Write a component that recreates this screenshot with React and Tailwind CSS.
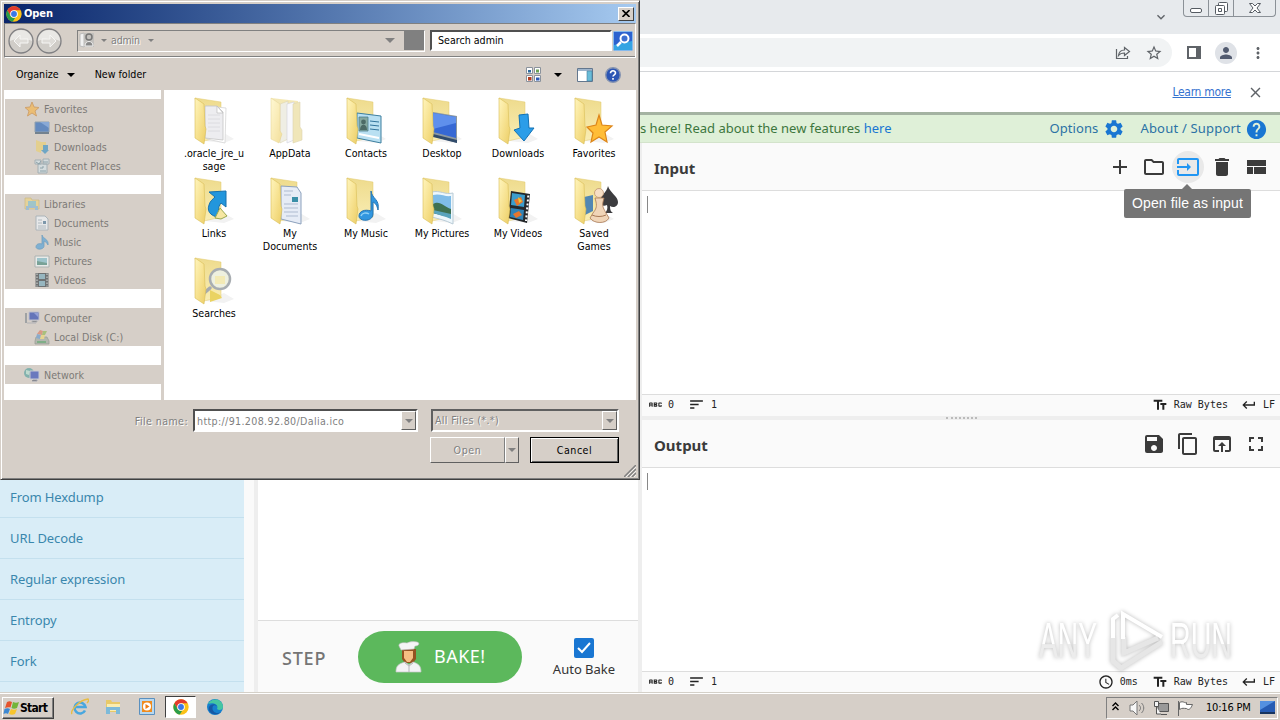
import {
  MdAbc, MdAdd, MdClose, MdContentCopy, MdDelete, MdExpandMore, MdFullscreen, MdHelp, MdInput,
  MdKeyboardReturn, MdMoreVert, MdOpenInBrowser, MdOutlineFolder, MdPerson, MdSave, MdSchedule,
  MdSettings, MdSort, MdStarBorder, MdTextFields,
} from "react-icons/md";

const operations = ["From Hexdump", "URL Decode", "Regular expression", "Entropy", "Fork"];

const places = [
  [["Favorites", "star"], ["Desktop", "desktop"], ["Downloads", "download"], ["Recent Places", "recent"]],
  [["Libraries", "library"], ["Documents", "doc"], ["Music", "music"], ["Pictures", "picture"], ["Videos", "video"]],
  [["Computer", "computer"], ["Local Disk (C:)", "disk"]],
  [["Network", "network"]],
];

const folders = [
  [".oracle_jre_u\nsage", "paper"],
  ["AppData", "appdata"],
  ["Contacts", "contacts"],
  ["Desktop", "desktop"],
  ["Downloads", "download"],
  ["Favorites", "star"],
  ["Links", "link"],
  ["My\nDocuments", "doc"],
  ["My Music", "music"],
  ["My Pictures", "picture"],
  ["My Videos", "video"],
  ["Saved\nGames", "games"],
  ["Searches", "search"],
];

const ChromeLogo = ({ size }) => (
  <svg width={size} height={size} viewBox="0 0 48 48" className="shrink-0">
    <circle cx="24" cy="24" r="23" fill="#fbc116" />
    <path d="M4.100 12.500A23 23 0 0 1 43.900 12.500H24L14 29.800z" fill="#e33b2e" />
    <path d="M4.100 12.500 14 29.800a11.500 11.500 0 0 0 14 5L20.500 46.700A23 23 0 0 1 4.100 12.500z" fill="#2a9d4a" />
    <circle cx="24" cy="24" r="11.500" fill="#fff" />
    <circle cx="24" cy="24" r="8.800" fill="#3b78e7" />
  </svg>
);

const folderContents = {
  paper: (
    <>
      <path d="M17 9 36 11 35 46 17 42z" fill="#fff" stroke="#d5d5d5" strokeWidth=".8" />
      <path d="M15 9h12l6 6v28l-18-2z" fill="#ededf0" stroke="#c4c4c4" strokeWidth=".8" />
      <path d="M27 9v7h6z" fill="#fff" stroke="#bbb" strokeWidth=".7" />
      <path d="M18 18h12M18 22h12M18 26h12M18 30h12M18 34h12" fill="none" stroke="#dcdce0" />
    </>
  ),
  contacts: (
    <>
      <path d="M15 16 39 19V46L15 41z" fill="#b9e0f2" stroke="#3d7f9f" />
      <path d="M17 20h9v14h-9z" fill="#86a9a0" stroke="#4c7d8d" strokeWidth=".8" />
      <circle cx="21.500" cy="25" r="2.400" fill="#4d6b66" />
      <path d="M18 33c0-7 7-7 7 0z" fill="#4d6b66" />
      <path d="M28 24l9 1M28 28l9 1M28 32l9 1" stroke="#31739b" />
      <path d="M17 37l20 4" stroke="#fff" strokeWidth="2" />
    </>
  ),
  desktop: (
    <>
      <path d="M15 15 39 19V46L15 39z" fill="#8c98a0" />
      <path d="M15 16 38 20V41L15 35z" fill="#3668d4" />
      <path d="M15 16 38 20V26L15 32z" fill="#5f90ec" />
      <path d="M15 37 39 43V46L15 40z" fill="#314b6b" />
    </>
  ),
  download: (
    <path d="M25 18l9-1 1 14h5L30 44 20 33l6-2z" fill="#2b9de8" stroke="#1272b5" />
  ),
  star: (
    <path d="M29 18l3 10 10 1-7 6 2 10-8-5-8 5 2-9-6-6 9-2z" fill="#ffbd37" stroke="#dd8518" strokeWidth="1.200" />
  ),
  link: (
    <>
      <path d="M19 15l17-1v16l-5-4c-4 5-3 10 1 15-9-1-16-5-13-13 1-4 4-6 6-8z" fill="#2296dc" stroke="#1771ae" />
      <path d="M25 41l5-10 7 8-6 3z" fill="#f6e7a2" stroke="#9aa84f" />
    </>
  ),
  doc: (
    <>
      <path d="M15 9l16 1 4 6v31l-20-5z" fill="#e6ecf6" stroke="#8ca1bd" />
      <path d="M18 14h9M18 18h7M18 27h14M18 31h14M18 35h14M20 39h12" stroke="#aebbd0" />
      <path d="M26 20h6v5h-6z" fill="#3a8fa8" />
    </>
  ),
  music: (
    <>
      <path d="M29 14c1 8 9 8 7 19-1-5-3-7-5-8v12c0 8-14 8-14 2 0-5 6-7 12-5z" fill="#3196df" stroke="#2474b3" />
      <path d="M19 39c1-3 5-4 8-2" stroke="#8fd1f6" strokeWidth="1.500" fill="none" />
    </>
  ),
  picture: (
    <>
      <path d="M14 15c8-2 13 3 21 1v31c-8-4-14-5-21-7z" fill="#eef7fc" stroke="#b9cbd6" />
      <path d="M15 18c7-2 12 2 18 1v22c-7-3-12-4-18-5z" fill="#7fbce8" />
      <path d="M15 27c7-4 11 3 18 5v9c-7-3-12-3-18-5z" fill="#3f7152" />
      <path d="M15 33l18 4v5c-7-3-12-4-18-6z" fill="#5aa4bd" />
    </>
  ),
  video: (
    <>
      <path d="M17 14 36 17 33 46 14 41z" fill="#25282b" />
      <path d="M18 16l13 2-1 12-13-2z" fill="#3b9dcc" />
      <path d="M17 31l13 2-1 10-13-3z" fill="#3083b7" />
      <path d="M20 23l7-3 2 5-6 4zM19 37l6-3 3 4-6 3z" fill="#e8762c" />
      <path d="M24 20l4 4-3 2z" fill="#e7ca39" />
      <path d="M34.300 18.500 32 44" stroke="#fff" strokeWidth="2" strokeDasharray="2 2" />
    </>
  ),
  games: (
    <>
      <path d="M14 20l9-2v16l-8 4z" fill="#5287b3" />
      <path d="M38 9c2 7 10 10 10 16 0 5-5 6-8 4 0 4 1 6 3 7h-8c2-2 3-5 2-8-4 2-7 0-7-4 1-6 7-9 8-15z" fill="#3c3c3f" />
      <path d="M25 21h9l-1 4c-1 5 1 7 3 11l3 5c-3 6-15 6-19 0l3-5c3-4 4-6 3-11z" fill="#f0d5b8" stroke="#a87955" strokeWidth=".8" />
      <circle cx="29" cy="16" r="4.500" fill="#f6dec5" stroke="#b78b65" strokeWidth=".7" />
      <path d="M22 38c4 2 10 2 14 0" stroke="#a87955" fill="none" />
    </>
  ),
  search: (
    <>
      <path d="M20 33 30 38 32 41 20 45z" fill="#ead362" />
      <path d="M20 31 13 37" stroke="#a5aab0" strokeWidth="3.500" strokeLinecap="round" />
      <circle cx="30" cy="22" r="10" fill="#eef0df" stroke="#a8adb1" strokeWidth="2.500" />
      <path d="M25 19h10v8H25z" fill="#f5e7a3" opacity=".7" />
    </>
  ),
};

const FolderIcon = ({ kind }) => (
  <svg width="48" height="48" viewBox="0 0 48 48" className="shrink-0">
    <defs>
      <linearGradient id="flap" x1="0" y1="0" x2="1" y2="1">
        <stop offset="0" stopColor="#fff5bd" />
        <stop offset=".55" stopColor="#f6e08c" />
        <stop offset="1" stopColor="#ecce66" />
      </linearGradient>
      <linearGradient id="back" x1="0" y1="0" x2="0" y2="1">
        <stop offset="0" stopColor="#eedb8c" />
        <stop offset="1" stopColor="#f9edb4" />
      </linearGradient>
    </defs>
    {kind === "appdata" ? (
      <g opacity=".65">
        <path d="M5 1 32 4V42L10 44z" fill="url(#back)" />
        <path d="M14 7 22 4v38l-8 4z" fill="#e8e6d6" stroke="#c9bd88" strokeWidth=".6" />
        <path d="M21 7 28 5v38l-7 3z" fill="#f5f5fa" stroke="#b5b9c8" strokeWidth=".6" />
        <path d="M27 7 34 5v25l2 3v10l-9 3z" fill="#e9da95" stroke="#c9bd88" strokeWidth=".6" />
        <path d="M5 1 14 7v27l2 3-3 9-8-4z" fill="url(#flap)" stroke="#d5bb5a" strokeWidth=".5" />
      </g>
    ) : (
      <>
        <path d="M34 36 44 42 34 46 15 44z" fill="#f2f2f2" />
        <path d="M5 1 31 5V40L14 44z" fill="url(#back)" stroke="#e3ca6e" strokeWidth=".5" />
        {folderContents[kind]}
        <path d="M5 1 14 7 15 29l1 3-2 15-9-6z" fill="url(#flap)" stroke="#d8bd58" strokeWidth=".6" />
      </>
    )}
  </svg>
);

const smallIcons = {
  star: <path d="M8 1l2 5 5 .5-4 3.500 1.500 5L8 12l-4.500 3L5 10 1 6.500 6 6z" fill="#f3b857" stroke="#cc9350" />,
  desktop: (
    <>
      <path d="M1 2h14v10H1z" fill="#3f74bd" stroke="#7890a8" />
      <path d="M6 2h9v6z" fill="#709ddb" />
      <path d="M1 12h14v2H1z" fill="#53697d" />
    </>
  ),
  download: (
    <>
      <path d="M2 1l5 2v11l-5-2zM7 3h5v9H7z" fill="#e8cf7b" />
      <path d="M9 6h5v5h1l-4 4-4-4h2z" fill="#4d99c4" />
    </>
  ),
  recent: (
    <>
      <path d="M1 2h6v4H1zM9 1h6v5H9zM4 6h9v9H4z" fill="#d3e0e5" stroke="#92a4ad" />
      <path d="M2 4l3 2 2-3M9 4h5M6 10h3v-2M6 13h6" fill="none" stroke="#74929e" />
    </>
  ),
  library: (
    <>
      <path d="M1 2h6l1 2h7v9H1z" fill="#ead38a" stroke="#c9b36d" strokeWidth=".7" />
      <path d="M4 5h8v6H4z" fill="#8dc2c9" />
      <path d="M2 10h12v4h-3v-2H5v2H2z" fill="#8eb9d4" />
    </>
  ),
  doc: (
    <>
      <path d="M2 1h9l3 3v11H2z" fill="#edf1f5" stroke="#9dacb5" />
      <path d="M4 5h4M4 8h4M4 11h8M4 13h8" stroke="#a3b2bd" />
      <path d="M9 6h3v3H9z" fill="#5e85a1" />
    </>
  ),
  music: <path d="M8 1c1 4 7 4 6 10-1-2-2-3-4-4v5c0 4-8 4-8 1 0-3 3-4 6-3z" fill="#62a6d6" stroke="#4f8fbb" strokeWidth=".8" />,
  picture: (
    <>
      <path d="M1 3h14v11H1z" fill="#eef3f3" stroke="#9fa9aa" />
      <path d="M3 5h10v7H3z" fill="#8bc1cc" />
      <path d="M3 8l10 2v2H3z" fill="#5b9387" />
    </>
  ),
  video: (
    <>
      <path d="M1.500 1h13v14h-13z" fill="#4d5457" />
      <path d="M5 2h6v5H5zM5 9h6v5H5z" fill="#83aebd" />
      <path d="M3 1.500v13M13 1.500v13" stroke="#d9dddd" strokeDasharray="1.500 1.500" />
    </>
  ),
  computer: (
    <>
      <path d="M1 3h2v10H1z" fill="#8d9398" />
      <path d="M5 2h10v8H5z" fill="#4058b4" stroke="#b5bbd0" />
      <path d="M10 3h4v4z" fill="#7e91dc" />
      <path d="M8 11h5v1H8zM3 13h9" stroke="#a4a8b0" />
    </>
  ),
  disk: (
    <>
      <path d="M2 8h11l2 4v3H1v-3z" fill="#a8b0a7" stroke="#838b83" strokeWidth=".7" />
      <path d="M3 5l3-4 3 1-1 4z" fill="#d9876f" />
      <path d="M9 2l4 0-2 4-3 0z" fill="#9bbb63" />
      <path d="M2 9l1-4 4 1-1 4z" fill="#719fcd" />
      <path d="M7 6h4l-1 4H6z" fill="#ecd67e" />
      <path d="M3 13h9" stroke="#4d9f60" strokeWidth="1.500" />
    </>
  ),
  network: (
    <>
      <circle cx="5" cy="6" r="5" fill="#67a8a5" />
      <path d="M2 3l4 1-1 4-3-1z" fill="#b6ded0" />
      <path d="M6 4h9v8H6z" fill="#475dbb" stroke="#c2c8d8" />
      <path d="M9 13h4v1H8" stroke="#9197a8" />
    </>
  ),
};

const SmallIcon = ({ kind }) => (
  <svg width="16" height="16" viewBox="0 0 16 16" className="shrink-0 opacity-75">{smallIcons[kind]}</svg>
);

const Arrow = ({ className }) => (
  <svg width="8" height="4" viewBox="0 0 8 4" className={className}><path d="M0 0h8L4 4z" fill="currentColor" /></svg>
);

const BrowserTop = () => (
  <div className="flex h-[112px] shrink-0 flex-col">
    <div className="flex h-[34px] items-start justify-end bg-[#e7eaed]">
      <MdExpandMore size={16} className="mt-[9px] mr-[14px] text-[#5f6368]" />
      <div className="mr-1 flex h-[17px] w-[93px] rounded-b border border-t-0 border-[#8b9197] text-[#555b62]">
        <div className="flex w-[25px] justify-center border-r border-[#8b9197] pt-2">
          <svg width="12" height="5"><rect x=".5" y=".5" width="11" height="4" rx="1.500" fill="#fff" stroke="currentColor" /></svg>
        </div>
        <div className="flex w-[25px] justify-center border-r border-[#8b9197] pt-[2px]">
          <svg width="13" height="13" fill="#fff" stroke="currentColor">
            <rect x="3.500" y=".5" width="9" height="9" rx="1" />
            <rect x=".5" y="3.500" width="9" height="9" rx="1" />
            <path d="M3.500 6.500h3v3h-3z" />
          </svg>
        </div>
        <div className="flex flex-1 justify-center pt-[3px]">
          <svg width="12" height="10" fill="#fff" stroke="currentColor">
            <path d="M.5.5h3L6 3 8.500.5h3L8 5l3.500 4.500h-3L6 7 3.500 9.500h-3L4 5z" />
          </svg>
        </div>
      </div>
    </div>
    <div className="flex h-[37px] items-center justify-end bg-white pr-[13px] text-[#5f6368]">
      <div className="flex h-[29px] flex-1 items-center justify-end gap-[14px] rounded-r-full bg-[#f1f3f4] pr-[9px]">
        <svg width="16" height="16" viewBox="0 0 16 16" fill="none" stroke="currentColor" strokeWidth="1.200">
          <path d="M1.500 4v9.500h11V11" />
          <path d="M3.500 10.500C4 6.500 6 5 9.500 5V2.500L14.500 6.500l-5 4V8C7 8 5 8.500 3.500 10.500z" />
        </svg>
        <MdStarBorder size={18} />
      </div>
      <svg width="14" height="13" className="ml-[15px]">
        <path d="M1 1h12v11H1z" fill="none" stroke="currentColor" strokeWidth="2" />
        <path d="M9 1h4v11H9z" fill="currentColor" />
      </svg>
      <div className="ml-[14px] flex size-[22px] items-center justify-center rounded-full bg-[#dfe2e7]">
        <MdPerson size={18} className="text-[#525b70]" />
      </div>
      <MdMoreVert size={18} className="ml-[12px]" />
    </div>
    <div className="flex h-[41px] items-center justify-end border-t border-[#d4d6d9] bg-white pr-[16px] text-[#5f6368]">
      <span className="font-['DejaVu_Sans_Condensed','DejaVu_Sans',sans-serif] text-[12px] tracking-[-0.3px] text-[#3572cf] underline">Learn more</span>
      <MdClose size={17} className="ml-[16px]" />
    </div>
  </div>
);

const StatusBar = ({ time }) => (
  <div className="flex h-[21px] shrink-0 items-center border-t border-[#ddd] bg-[#fafafa] pr-[5px] pb-px pl-[5px] font-['DejaVu_Sans_Mono',monospace] text-[10px] text-[#222]">
    <MdAbc size={17} />
    <span className="ml-[4px]">0</span>
    <MdSort size={17} className="ml-[14px]" />
    <span className="ml-[6px]">1</span>
    <div className="ml-auto flex items-center">
      {time && (
        <>
          <MdSchedule size={16} />
          <span className="mr-[14px] ml-[6px]">{time}</span>
        </>
      )}
      <MdTextFields size={16} />
      <span className="mr-[13px] ml-[6px]">Raw Bytes</span>
      <MdKeyboardReturn size={16} />
      <span className="ml-[6px]">LF</span>
    </div>
  </div>
);

const Pane = ({ title, icons, time }) => (
  <>
    <div className="flex h-[48px] shrink-0 items-center border-b border-[#ddd] bg-[#fafafa] pr-[12px] pl-[12px] text-[#3b3b3b]">
      <h2 className="mt-[3px] flex-1 text-[15px] font-bold">{title}</h2>
      <div className="flex items-center gap-[10px]">{icons}</div>
    </div>
    <div className="flex-1 bg-white pt-[5px] pl-[5px]">
      <div className="h-[17px] w-px bg-[#888]" />
    </div>
    <StatusBar time={time} />
  </>
);

const Chef = () => (
  <svg width="28" height="32" viewBox="0 0 28 32">
    <path d="M8 8h14v10l-3 4h-8l-3-4z" fill="#945321" />
    <path d="M10 10h9v7l-3 4h-3l-3-4z" fill="#f6bf82" />
    <path d="M5 5C4 2 9 1 13 2c4-2 12-2 12 1-1 2-3 2-4 2l-1 3-13 1z" fill="#f5f5f5" stroke="#bbb" strokeWidth=".6" />
    <path d="M2 31c0-6 2-8 9-10l4 3 4-3c6 2 8 4 8 10z" fill="#f3f3f5" stroke="#c6c6c9" strokeWidth=".7" />
    <path d="M11 22l4 3 4-3M15 25v6" fill="none" stroke="#b5b5ba" />
  </svg>
);

const CyberChef = () => (
  <div className="flex min-h-0 flex-1 flex-col font-['Noto_Sans',sans-serif]">
    <div className="flex h-[31px] shrink-0 items-center border-t-[3px] border-b border-t-[#a4b3a2] border-b-[#d3e3cb] bg-[#dff0d8] pr-[12px] pl-[640px] text-[13px] text-[#3c763d]">
      <span className="flex-1 whitespace-nowrap">s here! Read about the new features <span className="text-[#1976d2]">here</span></span>
      <span className="tracking-[0.1px] text-[#2b72a5]">Options</span>
      <MdSettings size={22} className="mt-px ml-[5px] text-[#1976d2]" />
      <span className="ml-[15px] tracking-[0.2px] text-[#2b72a5]">About / Support</span>
      <MdHelp size={23} className="mt-px ml-[4px] text-[#1976d2]" />
    </div>
    <div className="flex min-h-0 flex-1">
      <div className="flex w-[244px] flex-col bg-[#d9edf7] pt-[334px] text-[13px] text-[#3a87ad]">
        {operations.map((name) => (
          <div key={name} className="flex h-[41px] shrink-0 items-center border-b border-[#c4e0ee] pt-[2px] pl-[10px] tracking-[-0.1px]">{name}</div>
        ))}
      </div>
      <div className="w-[10px] bg-[#fafafa]" />
      <div className="w-[4px] bg-[#eee]" />
      <div className="flex w-[380px] flex-col bg-white">
        <div className="mt-auto flex h-[72px] items-center border-t border-[#ddd] bg-[#fafafa]">
          <span className="ml-[24px] w-[76px] pt-[4px] text-[18px] font-medium tracking-[0.8px] text-[#757575]">STEP</span>
          <div className="flex h-[52px] w-[164px] items-center rounded-full bg-[#5cb85c] pl-[36px] text-[18px] tracking-[0.5px] text-white">
            <Chef />
            <span className="ml-[12px]">BAKE!</span>
          </div>
          <div className="ml-[29px] flex w-[66px] flex-col items-center pt-[2px] text-[13px] text-[#333]">
            <div className="flex size-[20px] items-center justify-center rounded-[2px] bg-[#1976d2]">
              <svg width="14" height="12" fill="none" stroke="#fff" strokeWidth="2"><path d="M1 6l4 4 8-9" /></svg>
            </div>
            <span className="mt-[2px] leading-[18px] whitespace-nowrap">Auto Bake</span>
          </div>
        </div>
      </div>
      <div className="flex w-[4px] items-center bg-[#eee]" />
      <div className="flex min-w-0 flex-1 flex-col">
        <div className="flex h-[273px] shrink-0 flex-col bg-[#fafafa] pb-px">
          <Pane
            title="Input"
            icons={
              <>
                <MdAdd size={24} />
                <MdOutlineFolder size={24} />
                <div className="-mx-1 flex size-[32px] items-center justify-center rounded-full bg-[#e9e9e9]">
                  <MdInput size={24} className="text-[#2196f3]" />
                </div>
                <MdDelete size={24} />
                <svg width="24" height="24" viewBox="0 0 24 24" fill="currentColor">
                  <path d="M3 19h6v-7H3v7zm7 0h12v-7H10v7zM3 5v6h19V5H3z" />
                </svg>
              </>
            }
          />
        </div>
        <div className="flex h-[4px] shrink-0 items-center justify-center bg-[#eee]">
          <div className="w-[31px] border-t-2 border-dotted border-[#bbb]" />
        </div>
        <div className="flex min-h-0 flex-1 flex-col">
          <Pane
            title="Output"
            time="0ms"
            icons={
              <>
                <MdSave size={24} />
                <MdContentCopy size={24} />
                <MdOpenInBrowser size={24} />
                <MdFullscreen size={24} />
              </>
            }
          />
        </div>
      </div>
    </div>
  </div>
);

const Taskbar = () => (
  <div className="flex h-[28px] shrink-0 items-center border-t border-[#d4d0c8] bg-[#d6cfc8] pr-[2px] pl-[2px] font-['DejaVu_Sans_Condensed','DejaVu_Sans',sans-serif] text-[11px] text-black shadow-[inset_0_1px_0_#fff]">
    <div className="mt-[2px] flex h-[22px] w-[52px] items-center border border-t-white border-r-[#404040] border-b-[#404040] border-l-white font-bold shadow-[inset_-1px_-1px_0_#808080]">
      <svg width="17" height="16" viewBox="0 0 17 16" className="shrink-0">
        <path d="M4 2c2-1 3-1 5 0L7.500 7.500C6 7 4 7 2 8z" fill="#e5532c" />
        <path d="M10 2c2 1 4 1 6 0l-2 6c-2 1-4 1-5.500 0z" fill="#73b53a" />
        <path d="M1.500 9c2-1 4-1 5.500 0l-2 5c-1-1-3-1-4.500 0z" fill="#3c88d2" />
        <path d="M8 9c2 1 4 1 6 0l-2 5c-2 1-4 1-6 0z" fill="#f7c52e" />
      </svg>
      <span className="text-[12px] tracking-[-0.7px]">Start</span>
    </div>
    <div className="ml-[17px] flex items-center">
      <svg width="18" height="18" viewBox="0 0 18 18" fill="none">
        <path d="M14 12.500a5.500 5.500 0 1 1 .5-3.500H5" stroke="#48a7df" strokeWidth="2.600" />
        <path d="M1 16C-1 13 8 2 17 1c1 1 0 3-1 4" stroke="#e7bd45" strokeWidth="1.400" />
      </svg>
      <svg width="18" height="18" viewBox="0 0 18 18" className="ml-[15px]">
        <path d="M2 2h5l1 2h8v10H2z" fill="#e8c968" />
        <path d="M3 6h13v7H3z" fill="#faedb0" />
        <path d="M2 9h14v7h-4v-4H6v4H2z" fill="#7dbad9" />
      </svg>
      <svg width="16" height="17" viewBox="0 0 16 17" className="ml-[17px]">
        <path d="M.5.5h15v16H.5z" fill="#b8d8ef" stroke="#5a90bf" />
        <path d="M3 3h10v11H3z" fill="#ef8c1f" />
        <circle cx="8" cy="8.500" r="4" fill="#fff" />
        <path d="M6.500 6l4 2.500-4 2.500z" fill="#ef7c12" />
      </svg>
      <div className="mt-px ml-[10px] flex h-[22px] w-[31px] items-center justify-center border border-t-[#404040] border-r-white border-b-white border-l-[#404040] bg-white">
        <ChromeLogo size={16} />
      </div>
      <svg width="18" height="18" viewBox="0 0 18 18" className="ml-[10px]">
        <circle cx="9" cy="9" r="8" fill="#1680ce" />
        <path d="M2 6c3-7 15-6 15 3 0 3-4 4-6 2 2-4-3-7-9-5z" fill="#45c6a2" />
        <path d="M7 8c-2 4 2 9 8 6-5 5-14 1-12-5 1-3 6-4 8-1-2-1-3-1-4 0z" fill="#1658a5" />
      </svg>
    </div>
    <div className="mt-[2px] ml-auto flex h-[22px] w-[172px] items-center border border-t-[#808080] border-r-white border-b-white border-l-[#808080] pl-[5px]">
      <svg width="7" height="9" fill="none" stroke="#000" strokeWidth="1.400" className="-mt-[3px]"><path d="M.5 4l3-3 3 3M.5 8l3-3 3 3" /></svg>
      <svg width="17" height="16" viewBox="0 0 17 16" className="ml-[10px]" fill="#f7f7f7" stroke="#777">
        <path d="M1 5h3l4-4v14l-4-4H1z" />
        <path d="M10 5c2 2 2 4 0 6M12.500 3c3 3 3 7 0 10" fill="none" />
      </svg>
      <svg width="17" height="16" viewBox="0 0 17 16" className="ml-[7px]" stroke="#555">
        <path d="M5 3.500h10.500v8H5zM8 14.500h6" fill="#999" />
        <path d="M1.500 1.500h4v5h-4zM3.500 7v7H8" fill="#f5f5f5" />
      </svg>
      <svg width="17" height="16" viewBox="0 0 17 16" className="ml-[7px]" fill="#fff" stroke="#666">
        <path d="M1.500 1v15" />
        <path d="M2.500 2.500c4-2 5 1 7 0v2h6c-2 5-4 6-6 4-3 0-4-1-7 1z" />
      </svg>
      <span className="mt-px ml-[12px] tracking-[-0.2px] whitespace-nowrap">10:16 PM</span>
      <svg width="15" height="13" viewBox="0 0 15 13" className="ml-[9px]">
        <path d="M0 0h15v12H0z" fill="#265bb3" />
        <path d="M0 0h15L0 9z" fill="#5490e0" />
        <path d="M0 11h15v2H0z" fill="#17345f" />
      </svg>
    </div>
  </div>
);

const NavButton = ({ flip }) => (
  <svg width="26" height="26" viewBox="0 0 26 26" className={flip ? "-scale-x-100" : ""}>
    <circle cx="13" cy="13" r="12" fill="#d0cdc8" stroke="#808083" strokeWidth="1.300" />
    <path d="M2 13a11 11 0 0 1 22 0c-6-3-15-3-22 0z" fill="#e9e8e5" />
    <path d="M6 13l6-6v4h8v4h-8v4z" fill="#dedcd8" stroke="#f6f6f4" />
  </svg>
);

const ComboButton = () => (
  <div className="flex h-[19px] w-[15px] items-center justify-center border border-t-white border-r-[#606060] border-b-[#606060] border-l-white bg-[#d6cfc8]">
    <Arrow className="h-[4px] w-[8px] text-[#808080]" />
  </div>
);

const OpenDialog = () => (
  <div className="absolute top-0 left-0 flex h-[480px] w-[640px] flex-col border border-t-[#d6cfc8] border-r-[#404040] border-b-[#404040] border-l-[#d6cfc8] bg-[#d6cfc8] p-[3px] font-['DejaVu_Sans_Condensed','DejaVu_Sans',sans-serif] text-[10.600px] text-black shadow-[inset_1px_1px_0_#fff,inset_-1px_-1px_0_#808080]">
    <div className="flex h-[19px] shrink-0 items-center bg-linear-to-r from-[#0a246a] to-[#a6caf0] pr-[2px] pl-[2px]">
      <ChromeLogo size={16} />
      <span className="mt-px ml-[2px] flex-1 text-[11px] font-bold tracking-[-0.1px] text-white">Open</span>
      <div className="flex h-[14px] w-[16px] items-center justify-center border border-t-white border-r-[#404040] border-b-[#404040] border-l-white bg-[#d6cfc8]">
        <svg width="8" height="7" stroke="#000" strokeWidth="1.600"><path d="M.5 0l7 7M7.500 0l-7 7" /></svg>
      </div>
    </div>

    <div className="flex h-[35px] shrink-0 items-center border border-t-[#808080] border-r-white border-b-white border-l-[#808080] pl-[3px] shadow-[inset_0_-1px_0_#808080]">
      <NavButton />
      <div className="ml-[2px] flex"><NavButton flip /></div>
      <div className="ml-[15px] flex h-[22px] w-[348px] items-center border border-t-[#808080] border-r-white border-b-white border-l-[#808080] text-[#808080]">
        <svg width="17" height="17" viewBox="0 0 17 17" className="ml-px">
          <path d="M1 2l4-1v14l-4-1z" fill="#f1f1f1" stroke="#bbb" />
          <path d="M5 1h10v14H5z" fill="#c2c0bd" />
          <circle cx="10" cy="5" r="3" fill="none" stroke="#777" strokeWidth="1.500" />
          <path d="M6 14c0-6 8-6 8 0z" fill="#888" stroke="#eee" />
        </svg>
        <Arrow className="ml-[5px] h-[3px] w-[6px]" />
        <span className="ml-[4px] tracking-[-0.2px] [text-shadow:1px_1px_0_#fff]">admin</span>
        <Arrow className="ml-[8px] h-[3px] w-[6px]" />
        <Arrow className="ml-auto h-[5px] w-[10px]" />
        <div className="ml-[9px] h-[19px] w-[20px] bg-[#808080]" />
      </div>
      <div className="ml-[5px] flex h-[21px] w-[182px] items-center border-2 border-t-[#505050] border-r-white border-b-white border-l-[#505050] bg-white pt-px pl-[6px]">Search admin</div>
      <svg width="20" height="20" viewBox="0 0 20 20" className="ml-px">
        <rect x=".5" y=".5" width="19" height="19" rx="1" fill="#2c62cf" stroke="#86b9ec" />
        <path d="M1 14l18-4v9H1z" fill="#35a4e3" />
        <circle cx="11.500" cy="7.500" r="4" fill="#3d6fd0" stroke="#fff" strokeWidth="2" />
        <path d="M8 11l-4 4" stroke="#fff" strokeWidth="2.500" />
      </svg>
    </div>

    <div className="flex h-[32px] shrink-0 items-center pt-px pr-[15px] pl-[12px]">
      <span>Organize</span>
      <Arrow className="ml-[8px]" />
      <span className="ml-[20px] flex-1">New folder</span>
      <svg width="15" height="15" viewBox="0 0 15 15" fill="#fff" stroke="#8a929c">
        <path d="M.5.5h6v6h-6zM8.500.5h6v6h-6zM.5 8.500h6v6h-6zM8.500 8.500h6v6h-6z" />
        <path d="M2 3h3v2.500H2z" fill="#2d6a9d" stroke="none" />
        <path d="M10 2.500h3v3h-3z" fill="#69a254" stroke="none" />
        <path d="M2 10h3.500v3.500H2z" fill="#b33d1e" stroke="none" />
        <path d="M10 10.500h3.500v3h-3.500z" fill="#2b58b5" stroke="none" />
      </svg>
      <Arrow className="ml-[13px]" />
      <svg width="16" height="14" viewBox="0 0 16 14" className="ml-[15px]">
        <path d="M.5.500h15v13H.5z" fill="#fff" stroke="#63778e" />
        <path d="M1 1h14v2H1z" fill="#9fb5cc" />
        <path d="M10 3h5v10h-5z" fill="#69bcd8" stroke="#477e9e" strokeWidth=".6" />
      </svg>
      <svg width="16" height="16" viewBox="0 0 16 16" className="ml-[12px]">
        <circle cx="8" cy="8" r="7.300" fill="#2c55b4" stroke="#8795b1" strokeWidth="1.400" />
        <path d="M5.500 6.300c0-3.300 5-3.300 5-.3 0 1.800-2.500 1.800-2.500 3.600M8 11v1.700" fill="none" stroke="#fff" strokeWidth="1.600" />
      </svg>
    </div>

    <div className="flex h-[310px] shrink-0">
      <div className="flex w-[157px] flex-col gap-[19px] bg-white pt-[9px] pl-px text-[#7c7a77]">
        {places.map((group) => (
          <div key={group[0][0]} className="bg-[#d6cfc8]">
            {group.map(([name, icon], i) => (
              <div key={name} className={`flex h-[19px] items-center gap-[4px] ${i === 0 ? "pl-[19px]" : "pl-[29px]"}`}>
                <SmallIcon kind={icon} />
                <span className="pt-[2px] tracking-[0.05px]">{name}</span>
              </div>
            ))}
          </div>
        ))}
      </div>
      <div className="w-[3px]" />
      <div className="grid flex-1 auto-rows-[80px] grid-cols-[repeat(6,76px)] content-start overflow-hidden bg-white pt-[7px] pl-[12px]">
        {folders.map(([name, icon]) => (
          <div key={name} className="flex flex-col items-center">
            <FolderIcon kind={icon} />
            <span className="mt-[2px] text-center leading-[13px] whitespace-pre">{name}</span>
          </div>
        ))}
      </div>
    </div>

    <div className="flex flex-1 flex-col pt-[9px] pr-[17px]">
      <div className="flex items-center justify-end">
        <span className="mr-[5px] pt-[2px] tracking-[0.4px] text-[#808080] [text-shadow:1px_1px_0_#fff]">File name:</span>
        <div className="flex h-[23px] w-[225px] items-center justify-between border-2 border-t-[#505050] border-r-white border-b-white border-l-[#505050] bg-white pl-[2px] text-[#808080]">
          <span className="pt-[2px] tracking-[0.35px]">http://91.208.92.80/Dalia.ico</span>
          <ComboButton />
        </div>
        <div className="ml-[13px] flex h-[23px] w-[188px] items-center justify-between border-2 border-t-[#606060] border-r-white border-b-white border-l-[#606060] pl-[2px] text-[#808080]">
          <span className="pt-px tracking-[0.35px] [text-shadow:1px_1px_0_#fff]">All Files (*.*)</span>
          <ComboButton />
        </div>
      </div>
      <div className="mt-[5px] flex items-center justify-end">
        <div className="flex h-[26px] w-[75px] items-center justify-center border border-t-white border-r-[#808080] border-b-[#606060] border-l-white text-[#808080]">
          <span className="pt-[2px] tracking-[0.6px] [text-shadow:1px_1px_0_#fff]">Open</span>
        </div>
        <div className="flex h-[26px] w-[14px] items-center justify-center border border-t-white border-r-[#606060] border-b-[#606060] border-l-white text-[#808080]">
          <Arrow className="h-[4px] w-[8px]" />
        </div>
        <div className="ml-[11px] flex h-[26px] w-[89px] items-center justify-center border border-black pt-[2px] tracking-[0.5px] shadow-[inset_1px_1px_0_#fff,inset_-1px_-1px_0_#606060]">Cancel</div>
      </div>
    </div>
    <svg width="12" height="12" className="absolute right-[3px] bottom-[2px]" stroke="#808080" strokeWidth="1.500">
      <path d="M0 12 12 0M4 12l8-8M8 12l4-4" />
      <path d="M1.500 12.500l11-11M5.500 12.500l7-7M9.500 12.500l3-3" stroke="#fff" strokeWidth=".7" />
    </svg>
  </div>
);

const Watermark = () => (
  <svg width="220" height="72" viewBox="0 0 220 72" className="absolute top-[605px] left-[1036px] drop-shadow-[0_0_2px_rgba(0,0,0,0.28)]">
    <defs>
      <linearGradient id="fade" x1="0" y1="0" x2="0" y2="1">
        <stop offset=".55" stopColor="#fff" />
        <stop offset=".55" stopColor="#ececec" />
      </linearGradient>
    </defs>
    <g fill="url(#fade)" fontFamily="Liberation Sans" fontSize="50">
      <text x="3" y="53" textLength="58" lengthAdjust="spacingAndGlyphs">ANY</text>
      <text x="134" y="53" textLength="62" lengthAdjust="spacingAndGlyphs">RUN</text>
    </g>
    <path d="M77 32V56l8 7 41-26M88 32v16l34-15" fill="none" stroke="#e6e6e6" strokeWidth="5" />
    <path d="M77 33V14l5-4M87 34V9l39 23" fill="none" stroke="#fff" strokeWidth="4" />
  </svg>
);

const App = () => {
  return (
    <div className="relative flex h-[720px] w-[1280px] flex-col overflow-hidden bg-white font-['Noto_Sans',sans-serif]">
      <BrowserTop />
      <CyberChef />
      <Taskbar />
      <OpenDialog />
      <div className="absolute top-[189px] left-[1124px] flex h-[29px] w-[127px] items-center justify-center rounded-[2px] bg-[#757575] font-['Liberation_Sans',sans-serif] text-[14px] tracking-[0.1px] text-white">
        Open file as input
        <div className="absolute -top-[5px] left-[58px] border-x-[5px] border-b-[5px] border-x-transparent border-b-[#757575]" />
      </div>
      <Watermark />
    </div>
  );
};

export default App;
